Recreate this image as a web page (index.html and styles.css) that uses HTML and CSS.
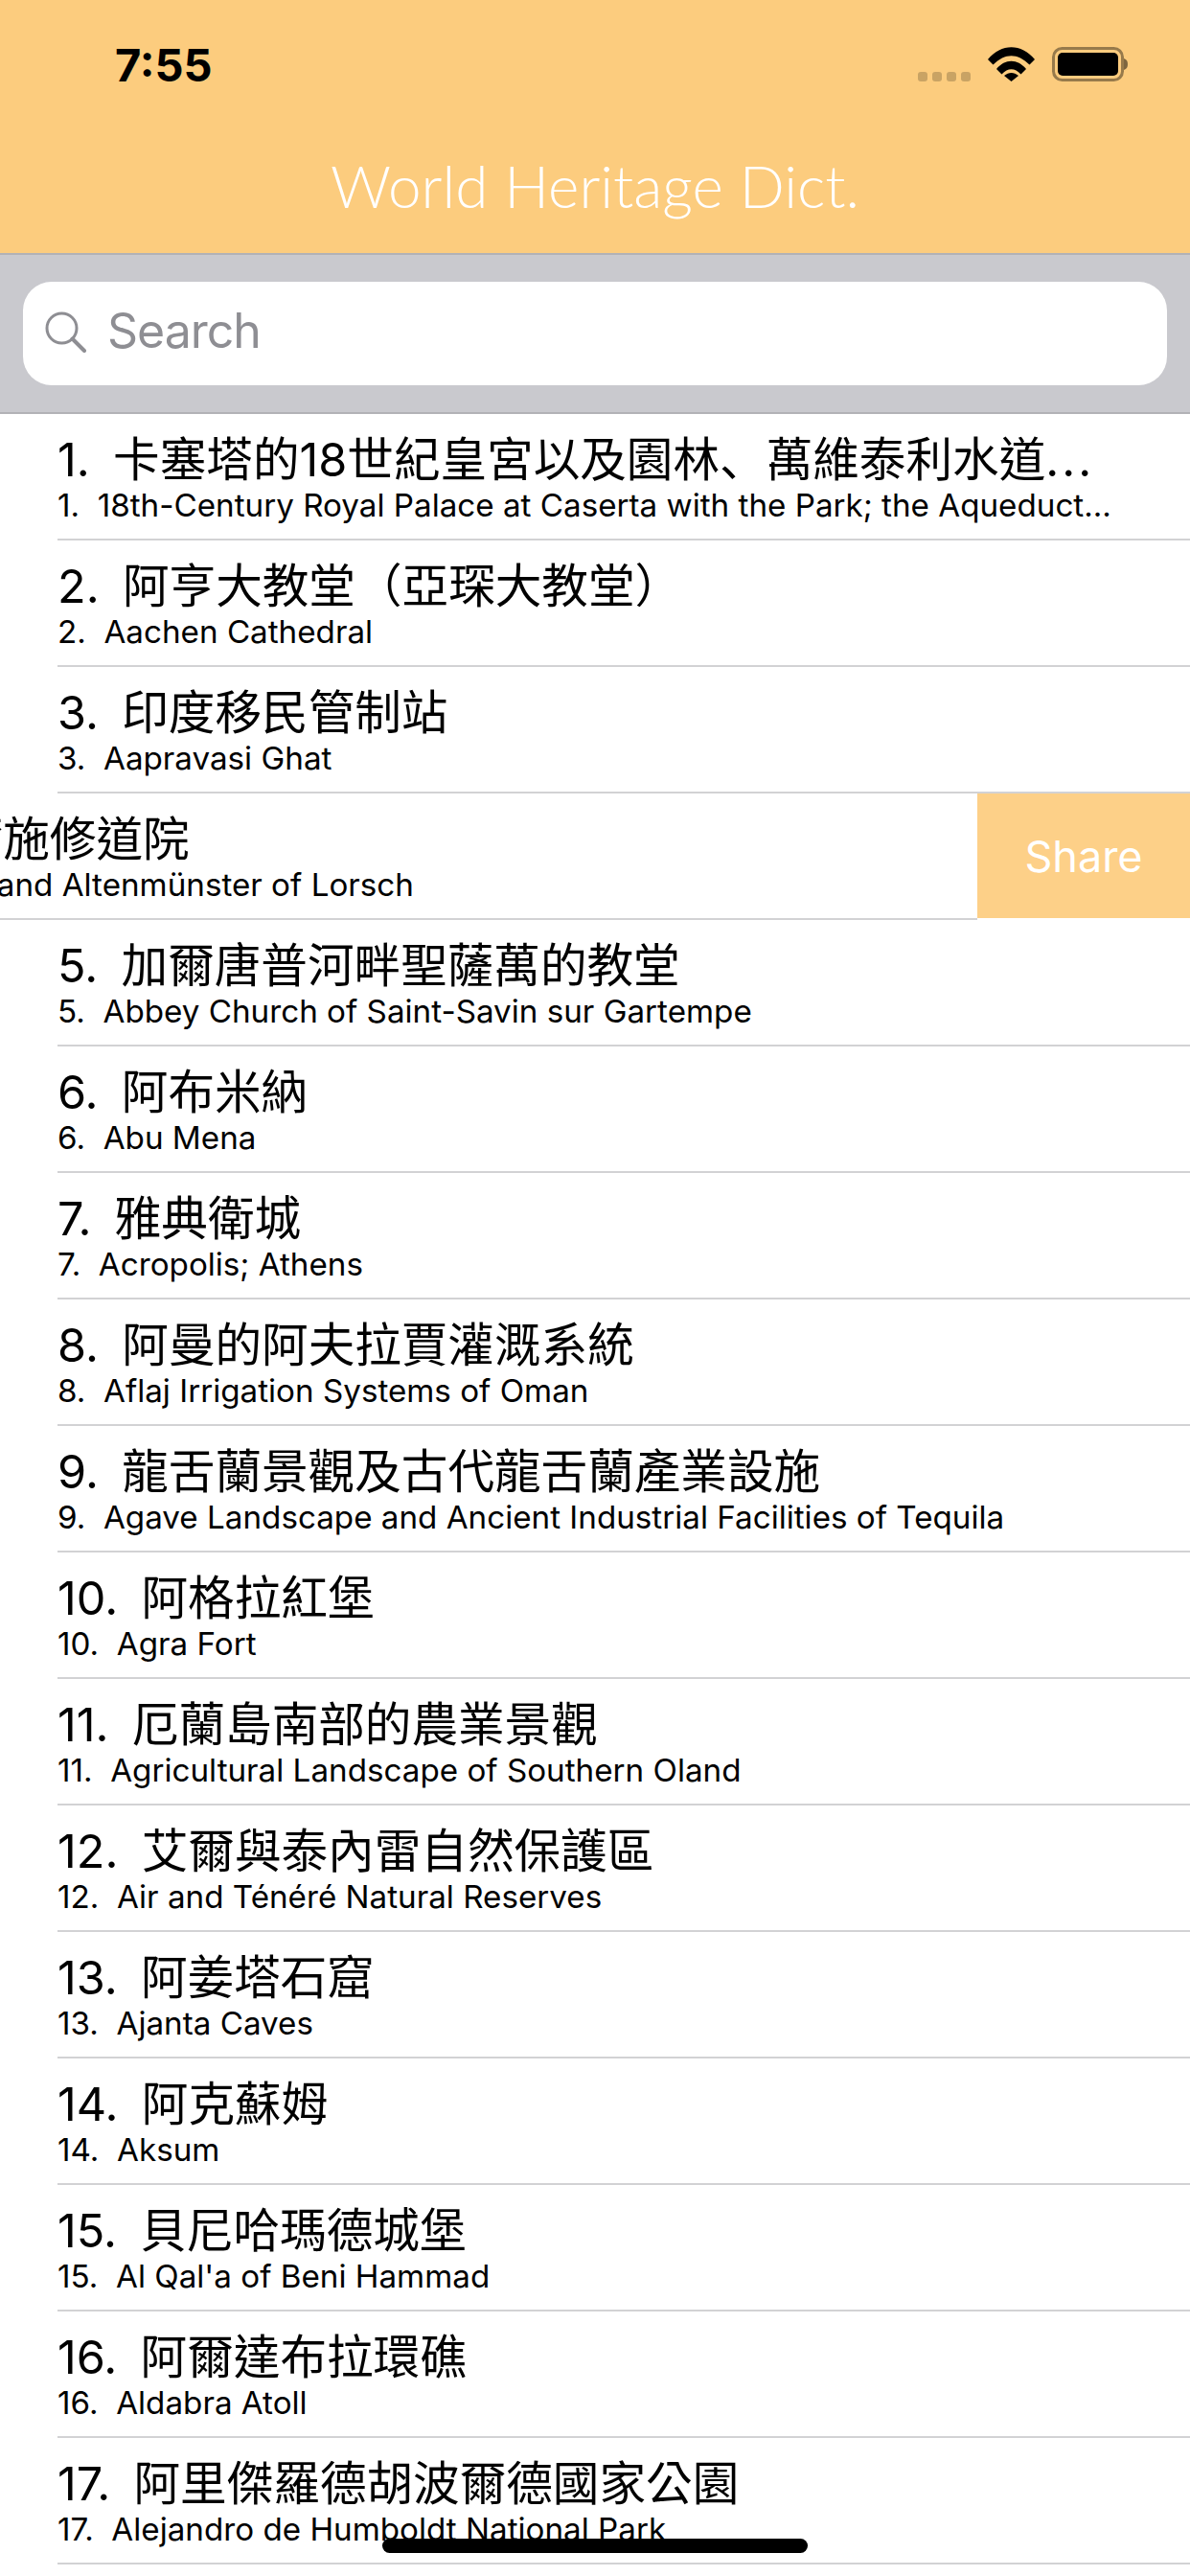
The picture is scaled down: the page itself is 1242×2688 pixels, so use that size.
FILE: index.html
```html
<!DOCTYPE html>
<html lang="en">
<head>
    <meta charset="UTF-8">
    <title>World Heritage Dict.</title>
    <link rel="stylesheet" href="styles.css">
</head>
<body>
    <div class="screen">
        <header class="header">
            <div class="status">
                <span class="status__time">7:55</span>
                <div class="status__icons">
                    <div class="signal"><i></i><i></i><i></i><i></i></div>
                    <svg class="wifi" width="49" height="36" viewBox="0 0 49 36">
                        <path d="M0 13 C14 -4 35 -4 49 13 L43.500 18.500 C31 6 18 6 5.500 18.500 Z"/>
                        <path d="M9 23 C18 12 31 12 40 23 L34.500 28.500 C28 21.500 21 21.500 14.500 28.500 Z"/>
                        <path d="M17 30 C22 26 27 26 32 30 L24.500 36 Z"/>
                    </svg>
                    <svg class="battery" width="79" height="36" viewBox="0 0 79 36">
                        <rect x="1.500" y="1.500" width="72" height="33" rx="9" fill="none" stroke="#000" stroke-opacity="0.4" stroke-width="3"/>
                        <rect x="6" y="6" width="63" height="24" rx="5"/>
                        <path d="M75 12 C78 13 79 15 79 18 C79 21 78 23 75 24 Z" fill-opacity="0.5"/>
                    </svg>
                </div>
            </div>
            <h1 class="header__title">World Heritage Dict.</h1>
        </header>

        <div class="searchbar">
            <div class="searchbar__field">
                <svg class="searchbar__icon" width="43" height="43" viewBox="0 0 43 43">
                    <circle cx="17.500" cy="17.500" r="15.500" fill="none" stroke="#8e8e93" stroke-width="3"/>
                    <path d="M28.500 28.500 L41 41" stroke="#8e8e93" stroke-width="4" stroke-linecap="round"/>
                </svg>
                <span class="searchbar__text">Search</span>
            </div>
        </div>

        <ul class="list">
            <li class="row"><div class="row__body">
                <p class="row__title">1.  卡塞塔的18世紀皇宮以及園林<span class="row__comma">、</span>萬維泰利水道<span class="row__dots">...</span></p>
                <p class="row__sub">1.  18th-Century Royal Palace at Caserta with the Park; the Aqueduct...</p>
            </div></li>
            <li class="row"><div class="row__body">
                <p class="row__title">2.  阿亨大教堂（亞琛大教堂）</p>
                <p class="row__sub">2.  Aachen Cathedral</p>
            </div></li>
            <li class="row"><div class="row__body">
                <p class="row__title">3.  印度移民管制站</p>
                <p class="row__sub">3.  Aapravasi Ghat</p>
            </div></li>
            <li class="row row--swiped">
                <div class="row__body">
                    <p class="row__title">4.  洛爾施修道院</p>
                    <p class="row__sub">4.  Abbey and Altenmünster of Lorsch</p>
                </div>
                <div class="row__action">Share</div>
            </li>
            <li class="row"><div class="row__body">
                <p class="row__title">5.  加爾唐普河畔聖薩萬的教堂</p>
                <p class="row__sub">5.  Abbey Church of Saint-Savin sur Gartempe</p>
            </div></li>
            <li class="row"><div class="row__body">
                <p class="row__title">6.  阿布米納</p>
                <p class="row__sub">6.  Abu Mena</p>
            </div></li>
            <li class="row"><div class="row__body">
                <p class="row__title">7.  雅典衛城</p>
                <p class="row__sub">7.  Acropolis; Athens</p>
            </div></li>
            <li class="row"><div class="row__body">
                <p class="row__title">8.  阿曼的阿夫拉賈灌溉系統</p>
                <p class="row__sub">8.  Aflaj Irrigation Systems of Oman</p>
            </div></li>
            <li class="row"><div class="row__body">
                <p class="row__title">9.  龍舌蘭景觀及古代龍舌蘭產業設施</p>
                <p class="row__sub">9.  Agave Landscape and Ancient Industrial Facilities of Tequila</p>
            </div></li>
            <li class="row"><div class="row__body">
                <p class="row__title">10.  阿格拉紅堡</p>
                <p class="row__sub">10.  Agra Fort</p>
            </div></li>
            <li class="row"><div class="row__body">
                <p class="row__title">11.  厄蘭島南部的農業景觀</p>
                <p class="row__sub">11.  Agricultural Landscape of Southern Oland</p>
            </div></li>
            <li class="row"><div class="row__body">
                <p class="row__title">12.  艾爾與泰內雷自然保護區</p>
                <p class="row__sub">12.  Air and Ténéré Natural Reserves</p>
            </div></li>
            <li class="row"><div class="row__body">
                <p class="row__title">13.  阿姜塔石窟</p>
                <p class="row__sub">13.  Ajanta Caves</p>
            </div></li>
            <li class="row"><div class="row__body">
                <p class="row__title">14.  阿克蘇姆</p>
                <p class="row__sub">14.  Aksum</p>
            </div></li>
            <li class="row"><div class="row__body">
                <p class="row__title">15.  貝尼哈瑪德城堡</p>
                <p class="row__sub">15.  Al Qal'a of Beni Hammad</p>
            </div></li>
            <li class="row"><div class="row__body">
                <p class="row__title">16.  阿爾達布拉環礁</p>
                <p class="row__sub">16.  Aldabra Atoll</p>
            </div></li>
            <li class="row"><div class="row__body">
                <p class="row__title">17.  阿里傑羅德胡波爾德國家公園</p>
                <p class="row__sub">17.  Alejandro de Humboldt National Park</p>
            </div></li>
        </ul>

        <div class="home-bar"></div>
    </div>
</body>
</html>
```

FILE: styles.css
```css
html{
    height: 100%;
}
body{
    margin: 0;
    background-color: white;
    font-family: Inter, "Noto Sans CJK TC", sans-serif;
    color: black;
}
p, h1, ul{
    margin: 0;
    padding: 0;
}
.screen{
    position: relative;
    width: 1242px;
    height: 2688px;
    overflow: hidden;
}

/* header */
.header{
    height: 264px;
    background-color: #fccc7e;
    box-sizing: border-box;
    padding-top: 42px;
}
.status{
    display: flex;
    justify-content: space-between;
    align-items: flex-start;
    height: 52px;
    padding: 0 65px 0 120px;
}
.status__time{
    font-size: 47px;
    line-height: 52px;
    font-weight: 700;
}
.status__icons{
    display: flex;
    align-items: flex-start;
    padding-top: 7px;
}
.signal{
    display: flex;
    gap: 5px;
    margin-top: 26px;
    margin-right: 18px;
}
.signal i{
    width: 10px;
    height: 10px;
    border-radius: 3px;
    background-color: rgba(0, 0, 0, 0.2);
}
.wifi{
    margin-right: 18px;
}
.header__title{
    margin-top: 63px;
    font-family: Lato, sans-serif;
    font-size: 62px;
    line-height: 72px;
    font-weight: 300;
    color: white;
    text-align: center;
}

/* search */
.searchbar{
    height: 168px;
    box-sizing: border-box;
    padding: 28px 24px 0;
    background-color: #c9c9ce;
    border-top: 2px solid #b2b2b6;
    border-bottom: 2px solid #b2b2b6;
}
.searchbar__field{
    display: flex;
    align-items: center;
    gap: 22px;
    height: 108px;
    padding-left: 23px;
    background-color: white;
    border-radius: 30px;
}
.searchbar__icon{
    margin-bottom: 4px;
}
.searchbar__text{
    font-size: 50px;
    letter-spacing: -1px;
    color: #8e8e93;
    padding-bottom: 6px;
}

/* list */
.list{
    list-style: none;
}
.row{
    height: 132px;
    padding-left: 60px;
    box-sizing: border-box;
}
.row__body{
    height: 132px;
    box-sizing: border-box;
    padding-top: 20px;
    border-bottom: 2px solid #d2d2d4;
    overflow: hidden;
}
.row__title{
    height: 55px;
    font-size: 48.6px;
    line-height: 55px;
    word-spacing: -1.500px;
    white-space: pre;
}
.row__comma{
    font-family: "Noto Sans CJK SC", sans-serif;
    line-height: 0;
}
.row__dots{
    letter-spacing: 3px;
}
.row__sub{
    font-size: 33.200px;
    line-height: 40px;
    white-space: pre;
    overflow: hidden;
}
.row--swiped{
    display: flex;
    padding-left: 0;
    overflow: hidden;
}
.row--swiped .row__body{
    flex: 1;
}
.row--swiped .row__title,
.row--swiped .row__sub{
    margin-left: -222px;
    padding-left: 60px;
}
.row__action{
    width: 222px;
    height: 130px;
    display: flex;
    align-items: center;
    justify-content: center;
    background-color: #fdd088;
    color: white;
    font-size: 45px;
}

.home-bar{
    position: absolute;
    left: 399px;
    top: 2649px;
    width: 444px;
    height: 15px;
    border-radius: 8px;
    background-color: black;
}
```
